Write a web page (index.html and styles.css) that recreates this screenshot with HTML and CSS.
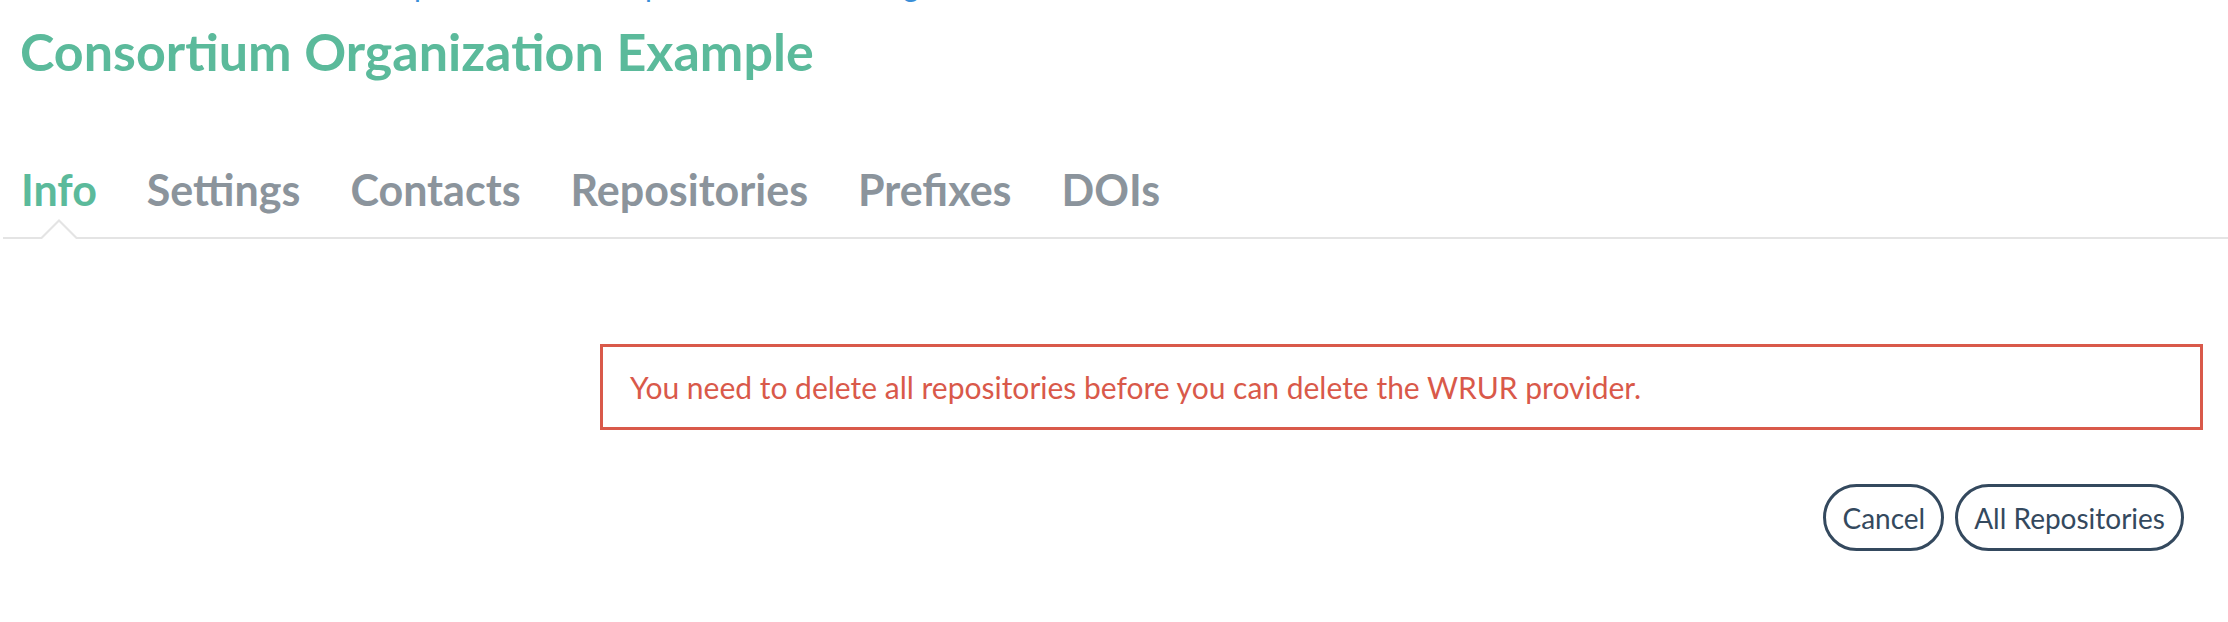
FILE: index.html
```html
<!DOCTYPE html>
<html lang="en">
<head>
    <meta charset="UTF-8">
    <meta name="viewport" content="width=device-width, initial-scale=1.0">
    <title>Consortium Organization Example</title>
    <link rel="stylesheet" href="styles.css">
</head>
<body>

    <header class="page-header">
        <div class="breadcrumb">
            <div class="crumbs">
                <a href="#">Home</a><span class="sep">/</span>
                <a href="#">Consortia</a><span class="sep">/</span>
                <a href="#">Sample Provider Group</a><span class="sep">/</span>
                <a href="#">Consortium Organization</a>
            </div>
        </div>
        <h1>Consortium Organization Example</h1>
    </header>

    <nav class="tabs">
        <a href="#info" class="active">Info</a>
        <a href="#settings">Settings</a>
        <a href="#contacts">Contacts</a>
        <a href="#repositories">Repositories</a>
        <a href="#prefixes">Prefixes</a>
        <a href="#dois">DOIs</a>
    </nav>

    <section class="content">
        <div class="alert">
            You need to delete all repositories before you can delete the WRUR provider.
        </div>

        <div class="actions">
            <button class="btn">Cancel</button>
            <button class="btn">All Repositories</button>
        </div>
    </section>

</body>
</html>
```

FILE: styles.css
```css
body {
    font-family: Lato, "Noto Sans", sans-serif;
    background-color: white;
    color: #34495e;
    margin: 0;
    padding: 0;
}

.page-header {
    padding: 0 20px;
}

/* only the bottom of the breadcrumb is left on screen */
.breadcrumb {
    height: 5px;
    overflow: hidden;
}
.crumbs {
    margin-top: -30px;
    font-size: 30px;
    line-height: 30px;
    padding-left: 40px;
}
.crumbs a {
    color: #3a8fd8;
    text-decoration: none;
}
.crumbs .sep {
    color: #aaa;
    margin: 0 12px;
}

h1 {
    margin: 13px 0 0 0;
    font-size: 52px;
    font-weight: 700;
    line-height: 66px;
    color: #5bba9b;
}

.tabs {
    display: flex;
    gap: 50px;
    margin: 80px 0 0 3px;
    padding-left: 18px;
    border-bottom: 2px solid #e4e4e4;
}
.tabs a {
    position: relative;
    font-size: 43px;
    font-weight: 700;
    color: #8b949c;
    text-decoration: none;
    padding-bottom: 22px;
}
.tabs a.active {
    color: #5bba9b;
}
.tabs a.active::before,
.tabs a.active::after {
    content: "";
    position: absolute;
    left: 50%;
    width: 0;
    height: 0;
    border-style: solid;
}
.tabs a.active::before {
    bottom: -2px;
    margin-left: -20px;
    border-width: 0 20px 20px 20px;
    border-color: transparent transparent #e4e4e4 transparent;
}
.tabs a.active::after {
    bottom: -2px;
    margin-left: -17px;
    border-width: 0 17px 17px 17px;
    border-color: transparent transparent white transparent;
}

.content {
    padding: 105px 25px 0 600px;
}

.alert {
    border: 3px solid #d9594a;
    color: #d9594a;
    font-size: 30px;
    padding: 22px 27px;
}

.actions {
    display: flex;
    justify-content: flex-end;
    gap: 11px;
    margin: 54px 19px 0 0;
}
.btn {
    font-family: Lato, "Noto Sans", sans-serif;
    font-size: 28px;
    color: #34495e;
    background: white;
    border: 3px solid #34495e;
    border-radius: 40px;
    height: 67px;
    padding: 0 16px;
    cursor: pointer;
}
```
